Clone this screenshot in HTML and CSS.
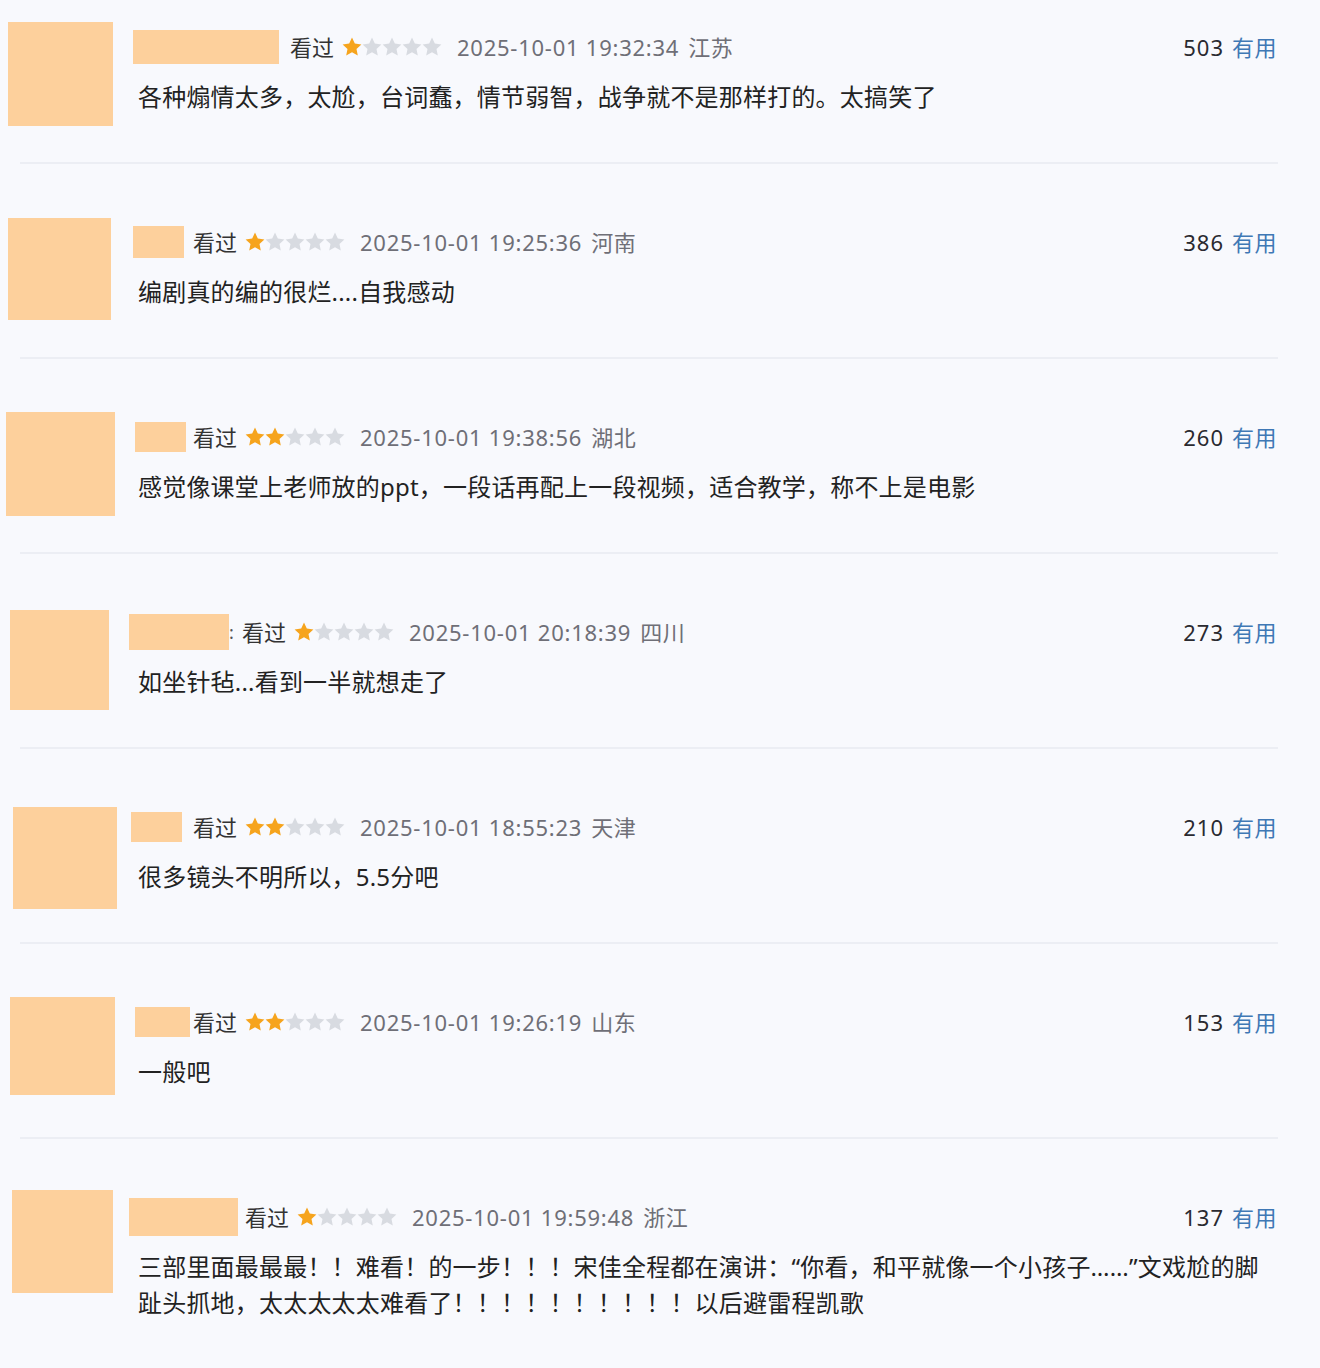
FILE: index.html
```html
<!DOCTYPE html>
<html lang="zh-CN">
<head>
<meta charset="utf-8">
<title>短评</title>
<link rel="stylesheet" href="styles.css">
</head>
<body>
<svg width="0" height="0" class="defs" aria-hidden="true">
  <defs>
    <symbol id="star" viewBox="0 0 20 20">
      <path d="M10 0.6l2.8 6 6.6.8-4.9 4.5 1.3 6.5L10 15.2l-5.8 3.2 1.3-6.5L0.6 7.4l6.6-.8z"/>
    </symbol>
  </defs>
</svg>
<main class="list">

  <section class="review">
    <div class="avatar av1"></div>
    <div class="body">
      <div class="head">
        <span class="name nm1"></span>
        <span class="seen">看过</span>
        <span class="stars"><svg class="on"><use href="#star"/></svg><svg><use href="#star"/></svg><svg><use href="#star"/></svg><svg><use href="#star"/></svg><svg><use href="#star"/></svg></span>
        <span class="time">2025-10-01 19:32:34</span><span class="region">江苏</span>
        <span class="votes"><b>503</b><em>有用</em></span>
      </div>
      <p class="text">各种煽情太多，太尬，台词蠢，情节弱智，战争就不是那样打的。太搞笑了</p>
    </div>
  </section>
  <div class="divider"></div>

  <section class="review">
    <div class="avatar av2"></div>
    <div class="body">
      <div class="head">
        <span class="name nm2"></span>
        <span class="seen">看过</span>
        <span class="stars"><svg class="on"><use href="#star"/></svg><svg><use href="#star"/></svg><svg><use href="#star"/></svg><svg><use href="#star"/></svg><svg><use href="#star"/></svg></span>
        <span class="time">2025-10-01 19:25:36</span><span class="region">河南</span>
        <span class="votes"><b>386</b><em>有用</em></span>
      </div>
      <p class="text">编剧真的编的很烂....自我感动</p>
    </div>
  </section>
  <div class="divider"></div>

  <section class="review">
    <div class="avatar av3"></div>
    <div class="body">
      <div class="head">
        <span class="name nm3"></span>
        <span class="seen">看过</span>
        <span class="stars"><svg class="on"><use href="#star"/></svg><svg class="on"><use href="#star"/></svg><svg><use href="#star"/></svg><svg><use href="#star"/></svg><svg><use href="#star"/></svg></span>
        <span class="time">2025-10-01 19:38:56</span><span class="region">湖北</span>
        <span class="votes"><b>260</b><em>有用</em></span>
      </div>
      <p class="text">感觉像课堂上老师放的ppt，一段话再配上一段视频，适合教学，称不上是电影</p>
    </div>
  </section>
  <div class="divider"></div>

  <section class="review">
    <div class="avatar av4"></div>
    <div class="body">
      <div class="head">
        <span class="name nm4"></span><span class="trace">:</span>
        <span class="seen">看过</span>
        <span class="stars"><svg class="on"><use href="#star"/></svg><svg><use href="#star"/></svg><svg><use href="#star"/></svg><svg><use href="#star"/></svg><svg><use href="#star"/></svg></span>
        <span class="time">2025-10-01 20:18:39</span><span class="region">四川</span>
        <span class="votes"><b>273</b><em>有用</em></span>
      </div>
      <p class="text">如坐针毡...看到一半就想走了</p>
    </div>
  </section>
  <div class="divider"></div>

  <section class="review">
    <div class="avatar av5"></div>
    <div class="body">
      <div class="head">
        <span class="name nm5"></span>
        <span class="seen">看过</span>
        <span class="stars"><svg class="on"><use href="#star"/></svg><svg class="on"><use href="#star"/></svg><svg><use href="#star"/></svg><svg><use href="#star"/></svg><svg><use href="#star"/></svg></span>
        <span class="time">2025-10-01 18:55:23</span><span class="region">天津</span>
        <span class="votes"><b>210</b><em>有用</em></span>
      </div>
      <p class="text">很多镜头不明所以，5.5分吧</p>
    </div>
  </section>
  <div class="divider"></div>

  <section class="review">
    <div class="avatar av6"></div>
    <div class="body">
      <div class="head">
        <span class="name nm6"></span>
        <span class="seen">看过</span>
        <span class="stars"><svg class="on"><use href="#star"/></svg><svg class="on"><use href="#star"/></svg><svg><use href="#star"/></svg><svg><use href="#star"/></svg><svg><use href="#star"/></svg></span>
        <span class="time">2025-10-01 19:26:19</span><span class="region">山东</span>
        <span class="votes"><b>153</b><em>有用</em></span>
      </div>
      <p class="text">一般吧</p>
    </div>
  </section>
  <div class="divider"></div>

  <section class="review">
    <div class="avatar av7"></div>
    <div class="body">
      <div class="head">
        <span class="name nm7"></span>
        <span class="seen">看过</span>
        <span class="stars"><svg class="on"><use href="#star"/></svg><svg><use href="#star"/></svg><svg><use href="#star"/></svg><svg><use href="#star"/></svg><svg><use href="#star"/></svg></span>
        <span class="time">2025-10-01 19:59:48</span><span class="region">浙江</span>
        <span class="votes"><b>137</b><em>有用</em></span>
      </div>
      <p class="text">三部里面最最最！！难看！的一步！！！宋佳全程都在演讲：“你看，和平就像一个小孩子……”文戏尬的脚趾头抓地，太太太太太难看了！！！！！！！！！！以后避雷程凯歌</p>
    </div>
  </section>

</main>
</body>
</html>
```

FILE: styles.css
```css
html, body {
  margin: 0;
  padding: 0;
  background: #f8f9fd;
}
body {
  width: 1320px;
  height: 1368px;
  overflow: hidden;
  font-family: "Noto Sans", "Noto Sans CJK SC", sans-serif;
  color: #222;
}
.defs {
  position: absolute;
  width: 0;
  height: 0;
}
.list {
  display: flex;
  flex-direction: column;
}
.review {
  height: 162px;
  box-sizing: border-box;
  padding-top: 22px;
  display: grid;
  grid-template-columns: 133px 1fr;
  align-items: start;
}
.divider {
  height: 2px;
  background: #eceef4;
  margin: 0 42px 31px 20px;
}
.avatar {
  background: #fdd09c;
  margin-left: 8px;
  width: 105px;
  height: 104px;
}
.av1 { margin-left: 8px; margin-top: 0; width: 105px; height: 104px; }
.av2 { margin-left: 8px; margin-top: 1px; width: 103px; height: 102px; }
.av3 { margin-left: 6px; margin-top: 0; width: 109px; height: 104px; }
.av4 { margin-left: 10px; margin-top: 3px; width: 99px; height: 100px; }
.av5 { margin-left: 13px; margin-top: 5px; width: 104px; height: 102px; }
.av6 { margin-left: 10px; margin-top: 0; width: 105px; height: 98px; }
.av7 { margin-left: 12px; margin-top: -2px; width: 101px; height: 103px; }

.body {
  margin-top: 8px;
  padding-right: 43px;
  min-width: 0;
}
.head {
  display: flex;
  align-items: center;
  height: 34px;
  font-size: 22px;
  line-height: 34px;
}
.name {
  background: #fdd09c;
  height: 34px;
  margin-right: 11px;
}
.nm1 { width: 146px; }
.nm2 { width: 51px; height: 32px; margin-right: 9px; }
.nm3 { width: 51px; height: 30px; margin-left: 2px; margin-right: 7px; }
.nm4 { width: 100px; height: 36px; margin-left: -4px; margin-right: 0; }
.nm5 { width: 51px; height: 30px; margin-left: -2px; margin-right: 11px; }
.nm6 { width: 55px; height: 30px; margin-left: 2px; margin-right: 3px; }
.nm7 { width: 109px; height: 38px; margin-left: -4px; margin-right: 7px; }

.trace {
  width: 13px;
  color: #555;
  font-size: 18px;
}
.seen {
  color: #333;
}
.stars {
  display: flex;
  margin-left: 8px;
  margin-right: 15px;
}
.stars svg {
  width: 20px;
  height: 20px;
  fill: #d8dbe1;
}
.stars svg.on {
  fill: #f6a41d;
}
.time {
  color: #6f6f77;
  letter-spacing: 0.75px;
}
.region {
  color: #6f6f77;
  margin-left: 9px;
  letter-spacing: 0.5px;
}
.votes {
  margin-left: auto;
  white-space: nowrap;
}
.votes b {
  font-weight: normal;
  color: #2a2a30;
  letter-spacing: 1px;
  margin-right: 8px;
}
.votes em {
  font-style: normal;
  color: #3f78b5;
  letter-spacing: 0.5px;
}
.text {
  margin: 15px 8px 0 5px;
  font-size: 24px;
  letter-spacing: 0.2px;
  line-height: 36px;
  color: #222;
}
```
